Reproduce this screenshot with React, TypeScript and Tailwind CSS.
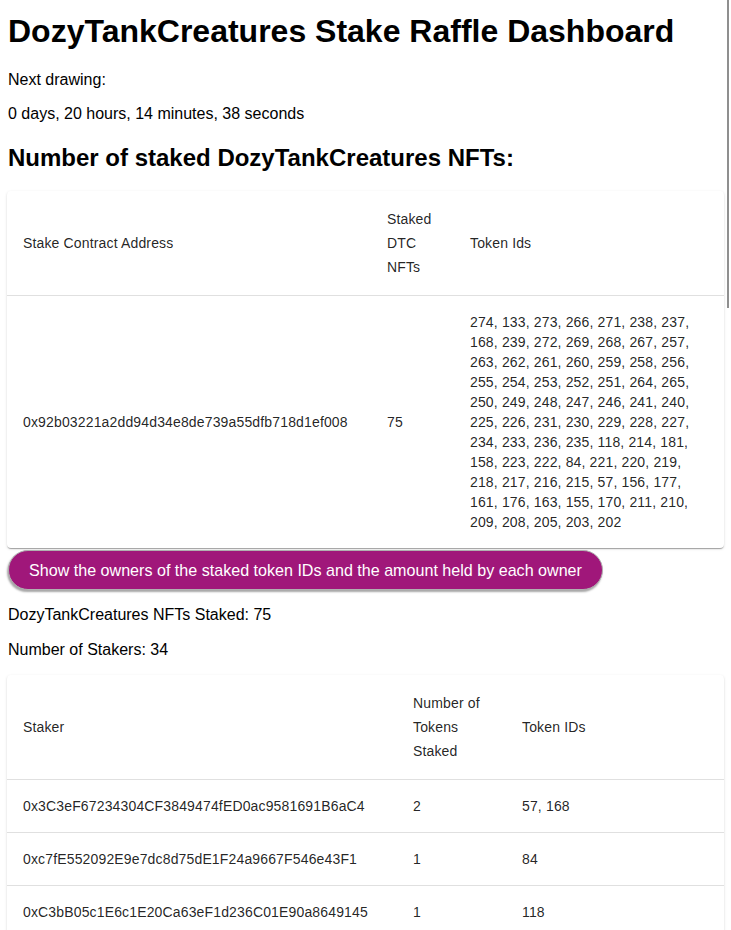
import React from "react";

const tokenIds =
  "274, 133, 273, 266, 271, 238, 237, 168, 239, 272, 269, 268, 267, 257, 263, 262, 261, 260, 259, 258, 256, 255, 254, 253, 252, 251, 264, 265, 250, 249, 248, 247, 246, 241, 240, 225, 226, 231, 230, 229, 228, 227, 234, 233, 236, 235, 118, 214, 181, 158, 223, 222, 84, 221, 220, 219, 218, 217, 216, 215, 57, 156, 177, 161, 176, 163, 155, 170, 211, 210, 209, 208, 205, 203, 202";

const stakers = [
  { addr: "0x3C3eF67234304CF3849474fED0ac9581691B6aC4", n: 2, ids: "57, 168" },
  { addr: "0xc7fE552092E9e7dc8d75dE1F24a9667F546e43F1", n: 1, ids: "84" },
  { addr: "0xC3bB05c1E6c1E20Ca63eF1d236C01E90a8649145", n: 1, ids: "118" },
];

const cardCls =
  "-mx-px bg-white rounded-[4px] shadow-[0px_2px_1px_-1px_rgba(0,0,0,0.2),0px_1px_1px_0px_rgba(0,0,0,0.14),0px_1px_3px_0px_rgba(0,0,0,0.12)] overflow-hidden";
const thCls =
  "p-4 text-left align-middle font-normal text-[14px] leading-6 tracking-[0.15px] text-[rgba(0,0,0,0.87)] border-b border-[#e0e0e0]";
const tdCls =
  "p-4 text-left align-middle text-[14px] leading-5 tracking-[0.15px] text-[rgba(0,0,0,0.87)] border-b border-[#e0e0e0]";

export default function App() {
  return (
    <div className="bg-white min-h-screen px-2 pt-[13px] pb-8 text-black font-['Liberation_Sans',Arial,sans-serif]">
      <h1 className="text-[32px] font-bold leading-[1.15] mb-[21px]">
        DozyTankCreatures Stake Raffle Dashboard
      </h1>
      <p className="text-base leading-[1.15] my-4">Next drawing:</p>
      <p className="text-base leading-[1.15] my-4">0 days, 20 hours, 14 minutes, 38 seconds</p>
      <h2 className="text-[24px] font-bold leading-[1.15] mt-[20px] mb-[20px]">
        Number of staked DozyTankCreatures NFTs:
      </h2>

      <div className={cardCls}>
        <table className="w-full table-fixed border-collapse">
          <colgroup>
            <col className="w-[364px]" />
            <col className="w-[83px]" />
            <col />
          </colgroup>
          <thead>
            <tr>
              <th className={thCls}>Stake Contract Address</th>
              <th className={thCls}>Staked DTC NFTs</th>
              <th className={thCls}>Token Ids</th>
            </tr>
          </thead>
          <tbody>
            <tr>
              <td className={tdCls + " border-b-0"}>0x92b03221a2dd94d34e8de739a55dfb718d1ef008</td>
              <td className={tdCls + " border-b-0"}>75</td>
              <td className={tdCls + " border-b-0"}>{tokenIds}</td>
            </tr>
          </tbody>
        </table>
      </div>

      <button className="mt-[2px] h-10 px-[20px] rounded-full bg-[#a0177a] text-white text-[16.1px] border border-[#b0b0b0] shadow-[-1px_2px_2px_rgba(0,0,0,0.35)] font-['Liberation_Sans',Arial,sans-serif]">
        Show the owners of the staked token IDs and the amount held by each owner
      </button>

      <p className="text-base leading-[1.15] my-4">DozyTankCreatures NFTs Staked: 75</p>
      <p className="text-base leading-[1.15] my-4">Number of Stakers: 34</p>

      <div className={cardCls}>
        <table className="w-full table-fixed border-collapse">
          <colgroup>
            <col className="w-[390px]" />
            <col className="w-[109px]" />
            <col />
          </colgroup>
          <thead>
            <tr>
              <th className={thCls}>Staker</th>
              <th className={thCls}>Number of Tokens Staked</th>
              <th className={thCls}>Token IDs</th>
            </tr>
          </thead>
          <tbody>
            {stakers.map((s) => (
              <tr key={s.addr}>
                <td className={tdCls}>{s.addr}</td>
                <td className={tdCls}>{s.n}</td>
                <td className={tdCls}>{s.ids}</td>
              </tr>
            ))}
          </tbody>
        </table>
      </div>

      <div className="fixed top-0 right-[2px] w-[2px] h-[308px] bg-[#8f8f8f]" />
    </div>
  );
}
